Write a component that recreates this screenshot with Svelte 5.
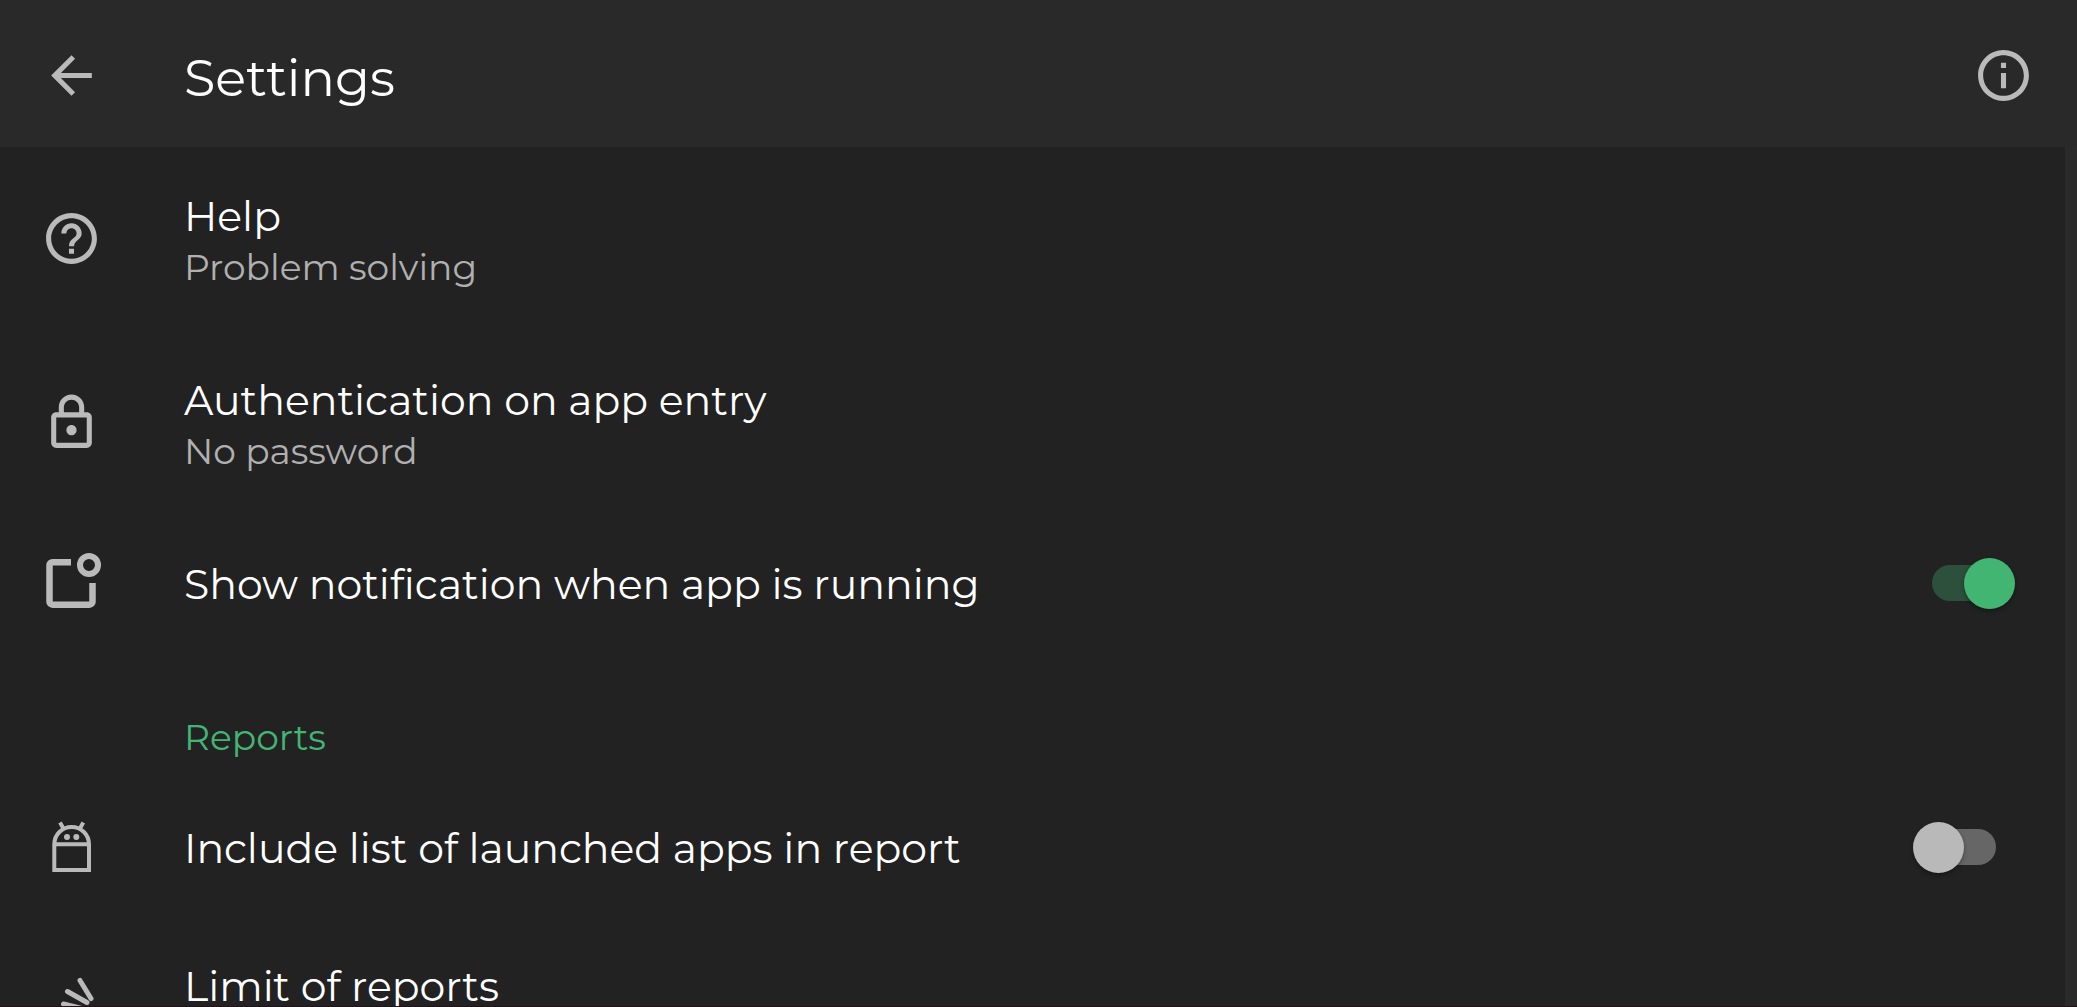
<script>
  let showNotification = $state(true);
  let includeApps = $state(false);
</script>

{#snippet helpIcon()}
  <svg class="icon" viewBox="0 0 24 24" aria-hidden="true">
    <path d="M11 18h2v-2h-2v2zm1-16C6.48 2 2 6.48 2 12s4.48 10 10 10 10-4.48 10-10S17.52 2 12 2zm0 18c-4.41 0-8-3.59-8-8s3.59-8 8-8 8 3.59 8 8-3.59 8-8 8zm0-14c-2.21 0-4 1.79-4 4h2c0-1.1.9-2 2-2s2 .9 2 2c0 2-3 1.75-3 5h2c0-2.25 3-2.5 3-5 0-2.21-1.79-4-4-4z" />
  </svg>
{/snippet}

{#snippet lockIcon()}
  <svg class="icon" viewBox="0 0 24 24" aria-hidden="true">
    <path d="M18 8h-1V6c0-2.76-2.24-5-5-5S7 3.240 7 6v2H6c-1.100 0-2 .9-2 2v10c0 1.100.9 2 2 2h12c1.100 0 2-.9 2-2V10c0-1.100-.9-2-2-2zM9 6c0-1.660 1.340-3 3-3s3 1.340 3 3v2H9V6zm9 14H6V10h12v10zm-6-3c1.100 0 2-.9 2-2s-.9-2-2-2-2 .9-2 2 .9 2 2 2z" />
  </svg>
{/snippet}

{#snippet badgeIcon()}
  <svg class="icon line" viewBox="0 0 61 61" aria-hidden="true">
    <path stroke-width="6.500" d="M30 9.200H11.500a3 3 0 0 0-3 3v36.500a3 3 0 0 0 3 3h37a3 3 0 0 0 3-3V30" />
    <circle cx="48" cy="12" r="9" stroke-width="6" />
  </svg>
{/snippet}

{#snippet androidIcon()}
  <svg class="icon line" viewBox="0 0 61 61" aria-hidden="true">
    <path stroke-width="4" d="M13.300 53V27.300a17.300 17.300 0 0 1 34.700 0V53zM13.300 27.300H48M19 5.500l4 7M42.300 5.500l-4 7" />
    <circle class="solid" cx="26" cy="20" r="3" />
    <circle class="solid" cx="35.300" cy="20" r="3" />
  </svg>
{/snippet}

{#snippet limitIcon()}
  <svg class="icon line" viewBox="0 0 61 61" aria-hidden="true">
    <path stroke-width="5" stroke-linecap="round" d="M39 2.500l11 18M26.500 13.500l19.500 11M22.500 26L41 30.500M22 39h19" />
  </svg>
{/snippet}

<div class="screen">
  <header>
    <button class="plain" type="button" aria-label="Back">
      <svg class="icon" viewBox="0 0 24 24" aria-hidden="true">
        <path d="M20 11H7.830l5.590-5.590L12 4l-8 8 8 8 1.410-1.410L7.830 13H20v-2z" />
      </svg>
    </button>
    <h1>Settings</h1>
    <button class="plain" type="button" aria-label="About">
      <svg class="icon" viewBox="0 0 24 24" aria-hidden="true">
        <path d="M11 7h2v2h-2V7zm0 4h2v6h-2v-6zm1-9C6.480 2 2 6.480 2 12s4.480 10 10 10 10-4.480 10-10S17.520 2 12 2zm0 18c-4.410 0-8-3.590-8-8s3.590-8 8-8 8 3.590 8 8-3.590 8-8 8z" />
      </svg>
    </button>
  </header>

  <main>
    <button class="row tall" type="button">
      {@render helpIcon()}
      <span class="text">
        <span class="title">Help</span>
        <span class="sub">Problem solving</span>
      </span>
    </button>
    <button class="row tall" type="button">
      {@render lockIcon()}
      <span class="text">
        <span class="title">Authentication on app entry</span>
        <span class="sub">No password</span>
      </span>
    </button>
    <label class="row">
      {@render badgeIcon()}
      <span class="text title">Show notification when app is running</span>
      <input type="checkbox" role="switch" bind:checked={showNotification} />
    </label>

    <h2>Reports</h2>

    <label class="row">
      {@render androidIcon()}
      <span class="text title">Include list of launched apps in report</span>
      <input type="checkbox" role="switch" bind:checked={includeApps} />
    </label>
    <button class="row tall" type="button">
      {@render limitIcon()}
      <span class="text title first">Limit of reports</span>
    </button>
  </main>
</div>

<style>
  :global(body) {
    margin: 0;
    background: #222;
  }

  .screen {
    display: flex;
    flex-direction: column;
    height: 100vh;
    box-sizing: border-box;
    overflow: hidden;
    border-bottom: 1px solid #1c1418;
    background: #222;
    color: #fff;
    font-family: Montserrat, Inter, "Open Sans", sans-serif;
    font-weight: 400;
    font-variant-ligatures: none;
  }

  header {
    display: flex;
    flex: none;
    align-items: center;
    gap: 82px;
    box-sizing: border-box;
    height: 147px;
    padding: 4px 43px 0 41px;
    background: #292929;
  }

  h1 {
    flex: 1;
    margin: 0;
    padding-top: 4px;
    font-size: 51px;
    font-weight: 400;
    line-height: 60px;
  }

  main {
    flex: 1;
    min-height: 0;
    overflow: hidden;
    border-right: 12px solid #2a2a2a;
  }

  button {
    border: 0;
    background: none;
    color: inherit;
    font: inherit;
    text-align: left;
    cursor: pointer;
  }

  .plain {
    display: flex;
    padding: 0;
  }

  .icon {
    display: block;
    flex: none;
    width: 61px;
    height: 61px;
    overflow: visible;
    fill: #bababa;
  }

  .line {
    fill: none;
    stroke: #bababa;
  }

  .solid {
    fill: #bababa;
    stroke: none;
  }

  .row {
    display: flex;
    align-items: center;
    gap: 82px;
    box-sizing: border-box;
    width: 100%;
    min-height: 138px;
    padding: 0 50px 2px 41px;
  }

  .tall {
    min-height: 184px;
  }

  .text {
    display: flex;
    flex: 1;
    flex-direction: column;
    padding-top: 2px;
  }

  .title {
    font-size: 41px;
    line-height: 56px;
  }

  .first {
    padding-bottom: 46px;
  }

  .sub {
    color: #b0b0b0;
    font-size: 36px;
    line-height: 46px;
  }

  h2 {
    margin: 0;
    padding: 61px 50px 19px 184px;
    color: #43b573;
    font-size: 36px;
    font-weight: 400;
    line-height: 46px;
  }

  input {
    display: grid;
    flex: none;
    align-items: center;
    width: 102px;
    height: 51px;
    margin: 0;
    appearance: none;
    cursor: pointer;
  }

  input::before,
  input::after {
    grid-area: 1 / 1;
    content: "";
  }

  input::before {
    height: 36px;
    margin: 0 19px;
    border-radius: 18px;
    background: #666;
  }

  input::after {
    width: 51px;
    height: 51px;
    border-radius: 50%;
    background: #b9b9b9;
    box-shadow: 0 2px 4px rgb(0 0 0 / 35%);
  }

  input:checked::before {
    background: #2c503b;
  }

  input:checked::after {
    justify-self: end;
    background: #43b573;
  }
</style>
